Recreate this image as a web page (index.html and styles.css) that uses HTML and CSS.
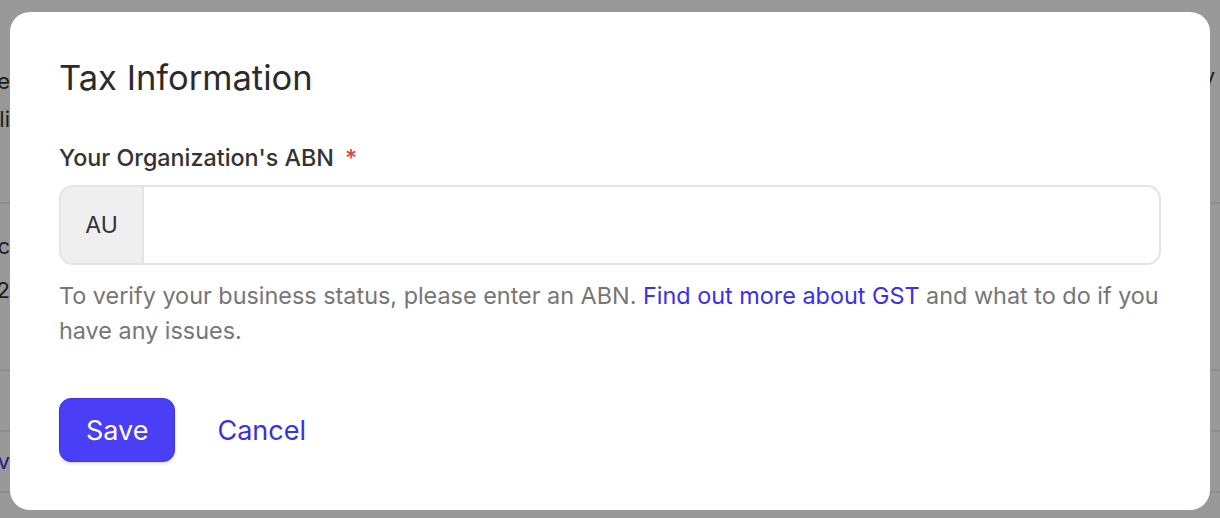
FILE: index.html
```html
<!DOCTYPE html>
<html lang="en">
<head>
<meta charset="utf-8">
<title>Tax Information</title>
<link rel="stylesheet" href="styles.css">
</head>
<body>
<div class="page">
  <div class="row row-1">
    <div class="cell-left">
      <div class="bg-line">Type</div>
      <div class="bg-line">Deli</div>
    </div>
    <div class="cell-right">Weekly</div>
  </div>
  <div class="row row-2">
    <div class="cell-left">
      <div class="bg-line">Acc</div>
      <div class="bg-line">2</div>
    </div>
  </div>
  <div class="row row-3"></div>
  <div class="row row-4">
    <div class="cell-left"><div class="bg-line bg-link">Nav</div></div>
  </div>
</div>

<div class="overlay">
  <div class="modal" role="dialog" aria-labelledby="modal-title">
    <h2 class="modal-title" id="modal-title">Tax Information</h2>
    <label class="field-label" for="abn">Your Organization's ABN <span class="required">*</span></label>
    <div class="input-group">
      <span class="input-prefix">AU</span>
      <input class="input" id="abn" type="text">
    </div>
    <p class="help-text">To verify your business status, please enter an ABN. <a class="link" href="#">Find out more about GST</a> and what to do if you have any issues.</p>
    <div class="actions">
      <button class="btn-primary" type="button">Save</button>
      <button class="btn-link" type="button">Cancel</button>
    </div>
  </div>
</div>
</body>
</html>
```
FILE: styles.css
```css
* { box-sizing: border-box; }

html, body {
  margin: 0;
  padding: 0;
  width: 1220px;
  height: 518px;
  overflow: hidden;
  font-family: Inter, "Noto Sans", sans-serif;
  background: #fff;
}

/* background page */
.page {
  width: 1220px;
  height: 518px;
  overflow: hidden;
}
.row {
  display: flex;
  justify-content: space-between;
  border-bottom: 2px solid #eaeaea;
}
.row-1 { height: 204px; padding-top: 62px; }
.row-2 { height: 167px; padding-top: 20px; }
.row-3 { height: 61px; }
.row-4 { height: 61px; padding-top: 10px; }
.cell-left {
  width: 200px;
  margin-left: -190px;
  text-align: right;
  font-size: 22px;
  color: #333;
}
.bg-line { line-height: 38px; height: 38px; }
.row-2 .bg-line { line-height: 44px; height: 44px; }
.bg-link { color: #3a2fe0; }
.cell-right {
  margin-right: 5px;
  font-size: 22px;
  color: #333;
  line-height: 28px;
}

/* overlay */
.overlay {
  position: fixed;
  inset: 0;
  background: rgba(0, 0, 0, 0.4);
  padding: 12px 10px 8px 10px;
}

.modal {
  width: 1200px;
  height: 498px;
  background: #fff;
  border-radius: 20px;
  padding: 46px 49px 0 49px;
}

.modal-title {
  margin: 0;
  font-size: 34.5px;
  line-height: 40px;
  font-weight: 400;
  color: #2b2b2b;
}

.field-label {
  display: block;
  margin-top: 45px;
  font-size: 23.3px;
  line-height: 30px;
  font-weight: 500;
  color: #333;
}
.required {
  color: #e5413b;
  margin-left: 5px;
}

.input-group {
  display: flex;
  margin-top: 12px;
  height: 80px;
  border: 2px solid #e3e3e3;
  border-radius: 14px;
  overflow: hidden;
}
.input-prefix {
  display: flex;
  align-items: center;
  justify-content: center;
  width: 83px;
  background: #efefef;
  border-right: 2px solid #e3e3e3;
  font-size: 23px;
  color: #333;
}
.input {
  flex: 1;
  border: 0;
  outline: 0;
  font: inherit;
  font-size: 22px;
  padding: 0 16px;
  background: #fff;
}

.help-text {
  margin: 13px 0 0 0;
  font-size: 23.4px;
  line-height: 35px;
  color: #767676;
}
.link {
  color: #3b30e6;
  text-decoration: none;
}

.actions {
  display: flex;
  align-items: center;
  gap: 42px;
  margin-top: 50px;
}
.btn-primary {
  height: 64px;
  padding: 0 26px;
  border: 1px solid #3f33e0;
  border-radius: 12px;
  background: #4a3ef7;
  color: #fff;
  font: inherit;
  font-size: 27px;
  box-shadow: 0 2px 3px rgba(0,0,0,0.12);
}
.btn-link {
  padding: 0;
  border: 0;
  background: none;
  color: #3b30e0;
  font: inherit;
  font-size: 27px;
}
```
